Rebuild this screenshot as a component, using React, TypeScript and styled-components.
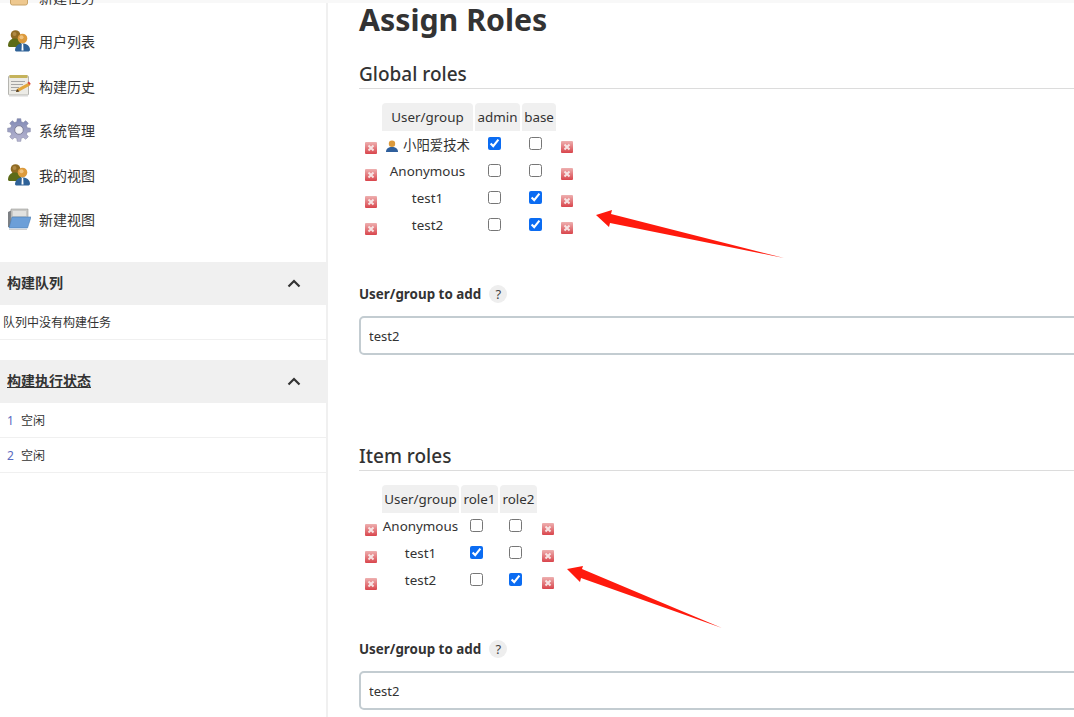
import styled, { createGlobalStyle } from "styled-components";

const GlobalStyle = createGlobalStyle`
  html, body {
    margin: 0;
    padding: 0;
    background: #fff;
    overflow: hidden;
  }
  body {
    font-family: "Noto Sans", "Noto Sans CJK SC", sans-serif;
    color: #333;
  }
`;

const fontStack = `"Noto Sans", "Noto Sans CJK SC", sans-serif`;

const TeamIcon = () => (
  <svg width="24" height="24" viewBox="0 0 24 24">
    <circle cx="8.500" cy="6" r="4.800" fill="#8f6a22" />
    <circle cx="7.500" cy="5" r="2" fill="#b08a45" />
    <path d="M1 17c0-5 3-7.500 7-7.500 3 0 6 2 6 5v3.500H3c-1 0-2-.5-2-1z" fill="#5c6b18" />
    <path d="M8 22c0-5 3-7.500 7.500-7.500S23 17 23 21c0 .8-1 1.500-2 1.500H10c-1 0-2-.5-2-1.500z" fill="#2f6298" />
    <path d="M14.800 15h1.400l.3 6.500h-2z" fill="#fff" />
    <circle cx="15.500" cy="9.500" r="4.800" fill="#dc9a3c" />
    <circle cx="14.500" cy="8.300" r="2" fill="#efc27e" />
  </svg>
);

const NotepadIcon = () => (
  <svg width="24" height="24" viewBox="0 0 24 24">
    <rect x="1.500" y="2" width="20" height="19" rx="1" fill="#ecebe6" stroke="#b5b5b0" />
    <rect x="2.500" y="1" width="18" height="3" fill="#c5b35b" />
    <path d="M4 7.500h14M4 10.500h12M4 13.500h8M4 16.500h6" stroke="#a5a5a5" />
    <path d="M9 18l1-3 11-6 2 2.500-11 6z" fill="#e2a63c" />
    <path d="M20.500 8.500l1.500-1 1.800 2.500-1.500 1z" fill="#d9443a" />
    <path d="M9 18l1-3 2.500 2.500z" fill="#4b3a26" />
    <path d="M2 22h19" stroke="#d8d8d8" />
  </svg>
);

// gear outline with eight square teeth, centred on 12,12
const gearPoints = Array.from({ length: 8 }, (_, k) => {
  const at = (deg: number, r: number) => {
    const a = ((k * 45 + deg) * Math.PI) / 180;
    return `${(12 + r * Math.cos(a)).toFixed(2)},${(12 + r * Math.sin(a)).toFixed(2)}`;
  };
  return [at(-15, 8.600), at(-9, 11.500), at(9, 11.500), at(15, 8.600)].join(" ");
}).join(" ");

const GearIcon = () => (
  <svg width="24" height="24" viewBox="0 0 24 24">
    <defs>
      <linearGradient id="gearFill" x1="0" y1="0" x2="0" y2="1">
        <stop offset="0" stopColor="#7f88b4" />
        <stop offset="1" stopColor="#b9b7d2" />
      </linearGradient>
    </defs>
    <polygon points={gearPoints} fill="url(#gearFill)" stroke="#7a7f9e" strokeWidth=".5" />
    <circle cx="12" cy="12" r="4.300" fill="#f4f4f6" stroke="#7f8099" />
  </svg>
);

const FolderIcon = () => (
  <svg width="24" height="24" viewBox="0 0 24 24">
    <path d="M1 5l3-1.500V20H1z" fill="#7c7f83" />
    <path d="M4 2h17v12H4z" fill="#c9c9c7" stroke="#9a9a98" strokeWidth=".6" />
    <path d="M6 4h13v5H6z" fill="#e2e2e0" />
    <path d="M5 10h19l-3.500 11H2z" fill="#6c9fd8" stroke="#4e7fb6" strokeWidth=".6" />
    <path d="M2 22.500h18" stroke="#d0d0d0" />
  </svg>
);

const ClipboardIcon = () => (
  <svg width="24" height="24" viewBox="0 0 24 24">
    <rect x="3.500" y="2" width="17" height="18" rx="2" fill="#eec88f" stroke="#c9a468" />
  </svg>
);

const DeleteIcon = () => (
  <svg width="12" height="12" viewBox="0 0 12 12">
    <defs>
      <linearGradient id="deleteFill" x1="0" y1="0" x2="0" y2="1">
        <stop offset="0" stopColor="#eeb0b0" />
        <stop offset="1" stopColor="#d9454c" />
      </linearGradient>
    </defs>
    <rect width="12" height="12" rx="1" fill="url(#deleteFill)" />
    <path d="M3.500 3.500l5 5M8.500 3.500l-5 5" stroke="#f7e4e4" strokeWidth="2" />
  </svg>
);

const UserIcon = () => (
  <svg width="12" height="12" viewBox="0 0 12 12">
    <path d="M0 12c0-3.400 2.400-5 6-5s6 1.600 6 5z" fill="#2f5f9c" />
    <circle cx="6" cy="3.800" r="3.200" fill="#dc9a3c" />
  </svg>
);

const Chevron = () => (
  <svg width="14" height="9" viewBox="0 0 14 9">
    <path d="M1.500 7.500L7 2l5.500 5.500" fill="none" stroke="#333" strokeWidth="2.200" />
  </svg>
);

const menuItems = [
  { icon: <ClipboardIcon />, label: "新建任务" },
  { icon: <TeamIcon />, label: "用户列表" },
  { icon: <NotepadIcon />, label: "构建历史" },
  { icon: <GearIcon />, label: "系统管理" },
  { icon: <TeamIcon />, label: "我的视图" },
  { icon: <FolderIcon />, label: "新建视图" },
];

type Row = { name: string; checks: boolean[]; withIcon?: boolean };
type Role = { name: string; width: number };

const globalRows: Row[] = [
  { name: "小阳爱技术", checks: [true, false], withIcon: true },
  { name: "Anonymous", checks: [false, false] },
  { name: "test1", checks: [false, true] },
  { name: "test2", checks: [false, true] },
];

const itemRows: Row[] = [
  { name: "Anonymous", checks: [false, false] },
  { name: "test1", checks: [true, false] },
  { name: "test2", checks: [false, true] },
];

const RoleTable = ({
  nameWidth,
  roles,
  rows,
}: {
  nameWidth: number;
  roles: Role[];
  rows: Row[];
}) => (
  <Table>
    <thead>
      <tr>
        <EdgeCell as="th" $left />
        <HeadCell $width={nameWidth}>User/group</HeadCell>
        {roles.map((role) => (
          <HeadCell key={role.name} $width={role.width}>
            {role.name}
          </HeadCell>
        ))}
        <EdgeCell as="th" />
      </tr>
    </thead>
    <tbody>
      {rows.map((row) => (
        <tr key={row.name}>
          <EdgeCell $left>
            <DeleteIcon />
          </EdgeCell>
          <NameCell>
            {row.withIcon && <UserIcon />}
            {row.name}
          </NameCell>
          {row.checks.map((checked, i) => (
            <CheckCell key={i}>
              <Check type="checkbox" defaultChecked={checked} />
            </CheckCell>
          ))}
          <EdgeCell>
            <DeleteIcon />
          </EdgeCell>
        </tr>
      ))}
    </tbody>
  </Table>
);

const AddUser = () => (
  <>
    <AddLabel>
      User/group to add <Help>?</Help>
    </AddLabel>
    <AddInput defaultValue="test2" />
  </>
);

const App = () => (
  <Page>
    <GlobalStyle />
    <TopStrip />
    <Columns>
      <Sidebar>
        <Menu>
          {menuItems.map((item) => (
            <MenuItem key={item.label}>
              {item.icon}
              {item.label}
            </MenuItem>
          ))}
        </Menu>
        <PaneHeader>
          <PaneTitle>构建队列</PaneTitle>
          <Chevron />
        </PaneHeader>
        <QueueRow>队列中没有构建任务</QueueRow>
        <PaneHeader $second>
          <PaneTitle $link>构建执行状态</PaneTitle>
          <Chevron />
        </PaneHeader>
        <ExecutorRow>
          <ExecutorNo>1</ExecutorNo>空闲
        </ExecutorRow>
        <ExecutorRow>
          <ExecutorNo>2</ExecutorNo>空闲
        </ExecutorRow>
      </Sidebar>
      <Main>
        <Title>Assign Roles</Title>
        <Section>
          <SectionTitle>Global roles</SectionTitle>
          <RoleTable
            nameWidth={91}
            roles={[
              { name: "admin", width: 45 },
              { name: "base", width: 34 },
            ]}
            rows={globalRows}
          />
          <AddUser />
        </Section>
        <Section $second>
          <SectionTitle>Item roles</SectionTitle>
          <RoleTable
            nameWidth={77}
            roles={[
              { name: "role1", width: 37 },
              { name: "role2", width: 37 },
            ]}
            rows={itemRows}
          />
          <AddUser />
        </Section>
      </Main>
    </Columns>
    <Arrows viewBox="0 0 1074 717">
      <path d="M596 215L612 210 611 214 784 258 610 223 609 227z" fill="#ff1a0d" />
      <path d="M567 569L583 566 582 569 722 628 581 578 580 582z" fill="#ff1a0d" />
    </Arrows>
  </Page>
);

const Page = styled.div`
  position: relative;
  width: 1074px;
  height: 717px;
  overflow: hidden;
`;

const TopStrip = styled.div`
  height: 3px;
  background: #f8f8f8;
`;

const Columns = styled.div`
  display: flex;
  align-items: flex-start;
`;

const Sidebar = styled.aside`
  flex: none;
  width: 328px;
  height: 714px;
  box-sizing: border-box;
  border-right: 2px solid #f0f0f0;
`;

const Menu = styled.div`
  display: flex;
  flex-direction: column;
  margin-top: -28.500px;
  margin-bottom: 20px;
`;

const MenuItem = styled.div`
  display: flex;
  align-items: center;
  gap: 8px;
  height: 44.500px;
  padding-left: 7px;
  font-size: 14px;
  color: #333;
`;

const PaneHeader = styled.div<{ $second?: boolean }>`
  display: flex;
  align-items: center;
  justify-content: space-between;
  height: 43px;
  margin-top: ${({ $second }) => ($second ? "20px" : "0")};
  padding: 0 25px 0 7px;
  background: #f0f0f0;
`;

const PaneTitle = styled.span<{ $link?: boolean }>`
  margin-bottom: 3px;
  font-size: 14px;
  font-weight: 700;
  color: #333;
  text-decoration: ${({ $link }) => ($link ? "underline" : "none")};
`;

const QueueRow = styled.div`
  height: 35px;
  line-height: 35px;
  padding-left: 3px;
  font-size: 12px;
  border-bottom: 1px solid #f0f0f0;
  box-sizing: border-box;
`;

const ExecutorRow = styled(QueueRow)`
  padding-left: 7px;
`;

const ExecutorNo = styled.span`
  color: #5c6bc0;
  margin-right: 7px;
`;

const Main = styled.main`
  flex: 1;
  min-width: 0;
  padding-left: 31px;
`;

const Title = styled.h1`
  margin: 0;
  height: 35px;
  line-height: 34px;
  font-family: ${fontStack};
  font-size: 30.300px;
  font-weight: 700;
  color: #333;
`;

const Section = styled.section<{ $second?: boolean }>`
  margin-top: ${({ $second }) => ($second ? "87px" : "22px")};
`;

const SectionTitle = styled.h2`
  margin: 0;
  height: 29px;
  line-height: 28px;
  font-size: 19px;
  font-weight: 500;
  color: #333;
  border-bottom: 1px solid #dcdcdc;
  box-sizing: border-box;
`;

const Table = styled.table`
  border-collapse: separate;
  border-spacing: 2px 0;
  margin: 14px 0 0 0;
  font-size: 13.400px;
`;

const HeadCell = styled.th<{ $width: number }>`
  box-sizing: border-box;
  width: ${({ $width }) => $width}px;
  min-width: ${({ $width }) => $width}px;
  height: 28px;
  padding: 0;
  font-weight: 400;
  background: #f0f0f0;
  border-radius: 4px 4px 0 0;
  color: #333;
`;

const EdgeCell = styled.td<{ $left?: boolean }>`
  box-sizing: border-box;
  width: ${({ $left }) => ($left ? "19px" : "15px")};
  padding: ${({ $left }) => ($left ? "7px 0 0 4px" : "5px 0 0 3px")};
  line-height: 0;
`;

const NameCell = styled.td`
  box-sizing: border-box;
  height: 27px;
  padding: 0 0 1px;
  text-align: center;
  white-space: nowrap;
  color: #333;

  svg {
    margin: 0 5px 0 1px;
    vertical-align: -2px;
  }
`;

const CheckCell = styled.td`
  padding: 0 0 2px;
  text-align: center;
  line-height: 0;
`;

const Check = styled.input`
  width: 13px;
  height: 13px;
  margin: 0 6.500px 0 0;
  accent-color: #0b6cf2;
`;

const AddLabel = styled.div`
  display: flex;
  align-items: center;
  gap: 8px;
  margin-top: 46px;
  height: 18px;
  font-size: 13.400px;
  font-weight: 700;
  color: #333;
`;

const Help = styled.span`
  display: inline-flex;
  align-items: center;
  justify-content: center;
  width: 18px;
  height: 18px;
  border-radius: 50%;
  background: #eee;
  font-size: 13px;
  font-weight: 400;
  color: #444;
`;

const AddInput = styled.input`
  display: block;
  box-sizing: border-box;
  width: 760px;
  height: 39px;
  margin-top: 13px;
  padding: 0 8px;
  border: 2px solid #c3ccd1;
  border-radius: 5px;
  font-family: ${fontStack};
  font-size: 13px;
  color: #333;
  outline: none;
`;

const Arrows = styled.svg`
  position: absolute;
  inset: 0;
  width: 1074px;
  height: 717px;
  pointer-events: none;
`;

export default App;
